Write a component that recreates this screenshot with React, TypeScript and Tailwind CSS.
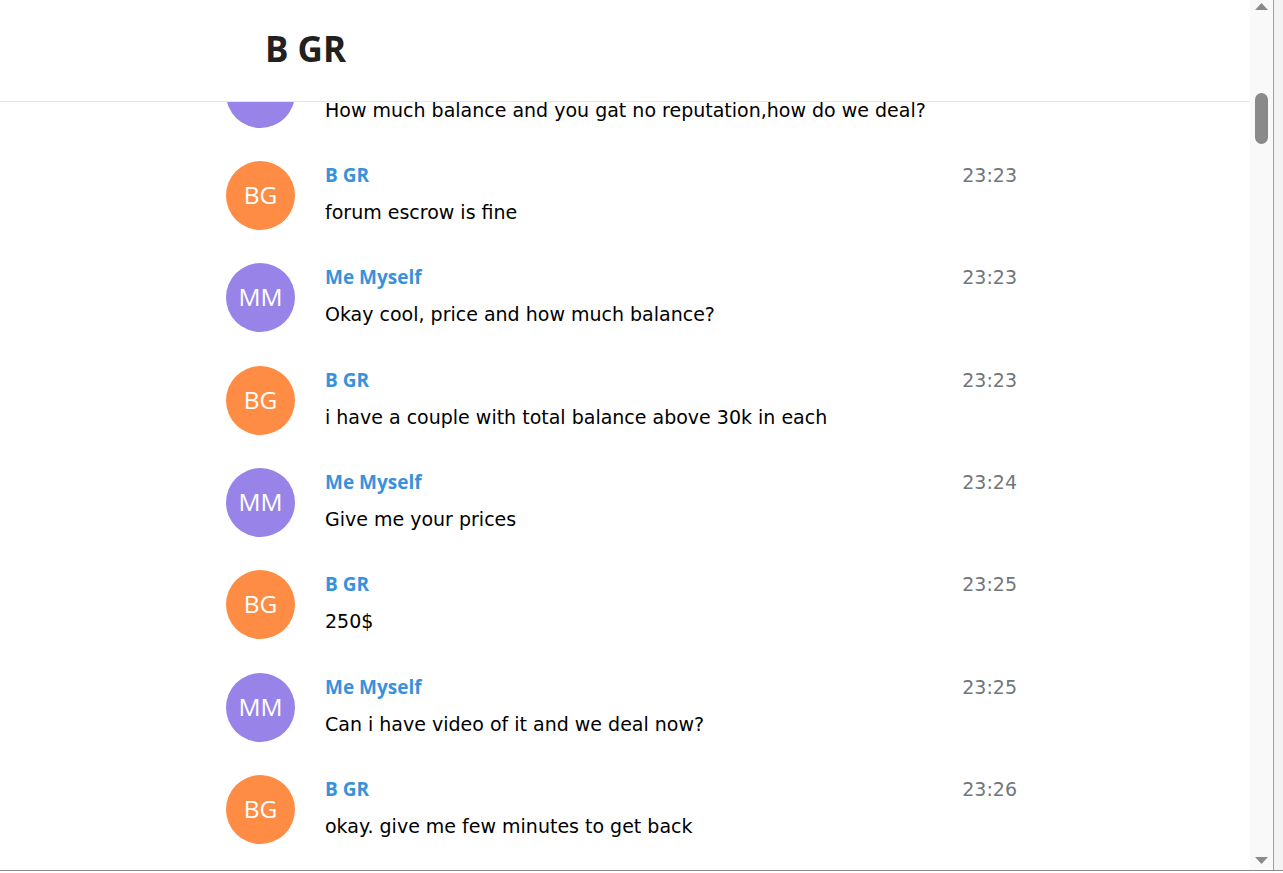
const messages = [
  { who: 'MM', name: 'Me Myself', time: '23:22', text: 'How much balance and you gat no reputation,how do we deal?' },
  { who: 'BG', name: 'B GR', time: '23:23', text: 'forum escrow is fine' },
  { who: 'MM', name: 'Me Myself', time: '23:23', text: 'Okay cool, price and how much balance?' },
  { who: 'BG', name: 'B GR', time: '23:23', text: 'i have a couple with total balance above 30k in each' },
  { who: 'MM', name: 'Me Myself', time: '23:24', text: 'Give me your prices' },
  { who: 'BG', name: 'B GR', time: '23:25', text: '250$' },
  { who: 'MM', name: 'Me Myself', time: '23:25', text: 'Can i have video of it and we deal now?' },
  { who: 'BG', name: 'B GR', time: '23:26', text: 'okay. give me few minutes to get back' },
]

const bodyFont = "font-['DejaVu_Sans',sans-serif]"
const boldFont = "font-['Open_Sans',sans-serif]"

function Message({ who, name, time, text }: (typeof messages)[number]) {
  const isMe = who === 'MM'
  return (
    <div className="flex h-[102.33px] shrink-0 items-start pl-[226px]">
      <div
        className={`flex h-[69px] w-[69px] shrink-0 items-center justify-center rounded-full text-[24.5px] text-white ${boldFont} ${
          isMe ? 'bg-[#9884e8]' : 'bg-[#ff8c44]'
        }`}
      >
        {who}
      </div>
      <div className="ml-[30px] w-[692px]">
        <div className="flex h-[28px] items-baseline justify-between">
          <span className={`text-[19px] font-bold leading-[28px] text-[#3892db] ${boldFont}`}>{name}</span>
          <span className={`text-[19px] leading-[28px] text-[#70777b] ${bodyFont}`}>{time}</span>
        </div>
        <div className={`mt-[9px] text-[19px] leading-[28px] text-black ${bodyFont}`}>{text}</div>
      </div>
    </div>
  )
}

function Scrollbar() {
  return (
    <div className="flex h-full w-[23px] shrink-0 flex-col items-center bg-[#f9f9f9]">
      <svg width="13" height="7" viewBox="0 0 13 7" className="mt-[3px]">
        <polygon points="6.5,0 13,7 0,7" fill="#8a8a8a" />
      </svg>
      <div className="mt-[83px] h-[51px] w-[13px] rounded-full bg-[#8a8a8a]" />
      <div className="flex-1" />
      <svg width="13" height="7" viewBox="0 0 13 7" className="mb-[6px]">
        <polygon points="0,0 13,0 6.5,7" fill="#8a8a8a" />
      </svg>
    </div>
  )
}

export default function App() {
  return (
    <div className="flex h-[873px] w-[1283px] flex-col overflow-hidden bg-white">
      <div className="flex h-[870px] shrink-0">
        <div className="flex w-[1250px] shrink-0 flex-col overflow-hidden">
          {/* Header, fixed over the scrolled list */}
          <div className="h-[102px] shrink-0 border-b border-[#e3e6e8] pl-[265px] pt-[31px]">
            <div className={`text-[35px] font-bold leading-[35px] text-[#212121] ${boldFont}`}>B GR</div>
          </div>
          {/* Messages, scrolled so the first one sits under the header */}
          <div className="flex-1 overflow-hidden">
            <div className="-mt-[43.33px] flex flex-col">
              {messages.map((m, i) => (
                <Message key={i} {...m} />
              ))}
            </div>
          </div>
        </div>
        <Scrollbar />
        <div className="w-px bg-[#a0a0a0]" />
        <div className="flex-1 bg-[#f3f3f3]" />
      </div>
      <div className="h-px shrink-0 bg-[#8a8a8a]" />
      <div className="flex-1 bg-white" />
    </div>
  )
}
